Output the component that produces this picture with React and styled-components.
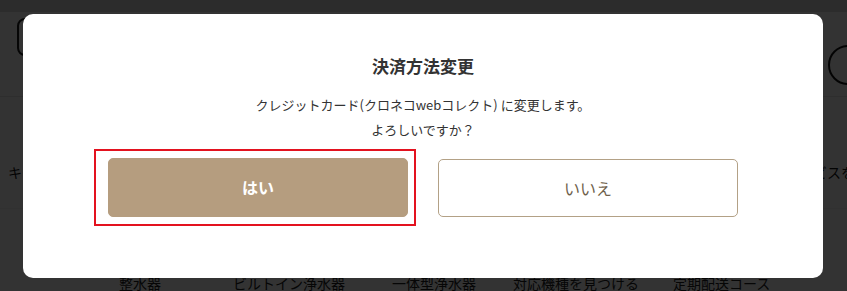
import React from 'react';
import styled, { createGlobalStyle } from 'styled-components';

const GlobalStyle = createGlobalStyle`
  html, body {
    margin: 0;
    padding: 0;
    background: #fff;
  }
  body {
    font-family: "Noto Sans CJK JP", "Noto Sans", sans-serif;
    color: #333;
  }
  * {
    box-sizing: border-box;
  }
`;

const Page = styled.div`
  position: relative;
  width: 847px;
  height: 291px;
  overflow: hidden;
  background: #fff;
`;

const TopStrip = styled.div`
  height: 12px;
  background: #dcdcdc;
`;

const Header = styled.div`
  height: 85px;
  display: flex;
  align-items: flex-start;
  justify-content: space-between;
  padding: 6px 9px 0 17px;
  border-bottom: 1px solid #e4e4e4;
`;

const Search = styled.div`
  width: 420px;
  height: 38px;
  border: 2px solid #222;
  border-radius: 8px;
`;

const RoundButton = styled.div`
  width: 40px;
  height: 40px;
  margin-top: 27px;
  margin-right: -30px;
  border: 2px solid #111;
  border-radius: 50%;
`;

const Middle = styled.div`
  height: 112px;
  display: flex;
  align-items: center;
  justify-content: space-between;
  padding: 38px 0 0 8px;
  border-bottom: 1px solid #f4f4f4;
  font-size: 14px;
  color: #111;
  white-space: nowrap;
`;

const Nav = styled.div`
  display: flex;
  padding: 64px 0 0 119px;
  font-size: 14px;
  color: #222;
  white-space: nowrap;
`;

const NavItem = styled.span`
  width: ${p => p.w}px;
`;

const Overlay = styled.div`
  position: absolute;
  inset: 0;
  background: rgba(0, 0, 0, 0.8);
  display: flex;
  align-items: center;
  justify-content: center;
`;

const Modal = styled.div`
  width: 800px;
  height: 264px;
  margin-right: 1px;
  background: #fff;
  border-radius: 10px;
  padding: 40px 0 0;
  display: flex;
  flex-direction: column;
  align-items: center;
`;

const Title = styled.h2`
  margin: 0;
  font-size: 17px;
  line-height: 24px;
  font-weight: 700;
  color: #333;
`;

const Message = styled.p`
  margin: 14px 0 0;
  font-size: 13px;
  line-height: 25px;
  text-align: center;
  color: #333;
`;

const Buttons = styled.div`
  display: flex;
  gap: 30px;
  margin-top: 16px;
`;

const Slot = styled.div`
  position: relative;
  padding-top: ${p => (p.$yes ? 0 : 1)}px;
`;

const Highlight = styled.div`
  position: absolute;
  top: -9px;
  left: -14px;
  right: -8px;
  bottom: -9px;
  border: 2px solid #e3121f;
  pointer-events: none;
`;

const Button = styled.button`
  width: 300px;
  height: ${p => (p.$yes ? 59 : 58)}px;
  border-radius: 5px;
  font-family: inherit;
  font-size: 16px;
  font-weight: ${p => (p.$yes ? 700 : 400)};
  color: ${p => (p.$yes ? '#fff' : '#6f5f4b')};
  background: ${p => (p.$yes ? '#b59d7f' : '#fff')};
  border: 1px solid ${p => (p.$yes ? '#b59d7f' : '#b3a186')};
  cursor: pointer;
`;

export default function App() {
  return (
    <>
      <GlobalStyle />
      <Page>
        <TopStrip />
        <Header>
          <Search />
          <RoundButton />
        </Header>
        <Middle>
          <span>キーワードから探す</span>
          <span style={{ marginRight: -8 }}>サービスを</span>
        </Middle>
        <Nav>
          <NavItem w={114}>整水器</NavItem>
          <NavItem w={159}>ビルトイン浄水器</NavItem>
          <NavItem w={121}>一体型浄水器</NavItem>
          <NavItem w={160}>対応機種を見つける</NavItem>
          <NavItem w={120}>定期配送コース</NavItem>
        </Nav>
        <Overlay>
          <Modal>
            <Title>決済方法変更</Title>
            <Message>
              クレジットカード(クロネコwebコレクト) に変更します。
              <br />
              よろしいですか？
            </Message>
            <Buttons>
              <Slot $yes>
                <Highlight />
                <Button $yes>はい</Button>
              </Slot>
              <Slot>
                <Button>いいえ</Button>
              </Slot>
            </Buttons>
          </Modal>
        </Overlay>
      </Page>
    </>
  );
}
